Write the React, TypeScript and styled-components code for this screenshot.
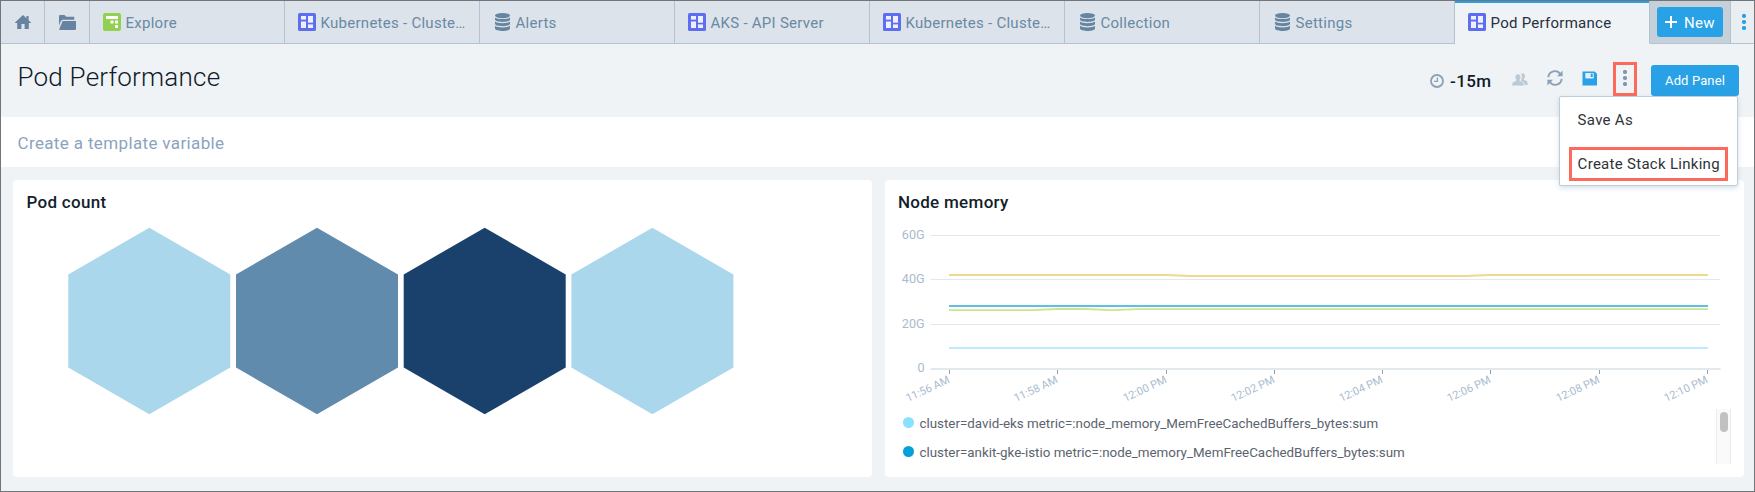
import React from "react";
import styled, { createGlobalStyle } from "styled-components";

const GlobalStyle = createGlobalStyle`
  * { box-sizing: border-box; }
  body { margin: 0; font-family: Roboto, "Liberation Sans", sans-serif; }
  svg { display: block; flex: none; }
  button { font-family: inherit; border: 0; padding: 0; }
`;

const Page = styled.div`
  display: flex;
  flex-direction: column;
  width: 1755px;
  height: 492px;
  border: 1px solid #737578;
  background: #eff3f5;
  overflow: hidden;
`;

/* ---------- Tab bar ---------- */

const TabBar = styled.nav`
  display: flex;
  flex: none;
  height: 43px;
`;

const NavCell = styled.div<{ $width: number; $bg?: string; $last?: boolean }>`
  display: flex;
  flex: none;
  align-items: center;
  justify-content: center;
  width: ${(p) => p.$width}px;
  background: ${(p) => p.$bg ?? "#dce3ea"};
  border-right: ${(p) => (p.$last ? "0" : "1px solid #b4c3d1")};
  border-bottom: 1px solid #b4c3d1;
`;

const Tab = styled.div<{ $active?: boolean }>`
  display: flex;
  flex: none;
  align-items: center;
  gap: 4.5px;
  width: 195px;
  padding: 0 13px;
  color: ${(p) => (p.$active ? "#26303f" : "#6a89a5")};
  background: ${(p) => (p.$active ? "#eff3f5" : "#dce3ea")};
  border-right: 1px solid #b4c3d1;
  border-bottom: 1px solid ${(p) => (p.$active ? "#eff3f5" : "#b4c3d1")};
  box-shadow: ${(p) => (p.$active ? "inset 0 2px 0 #29a1e6" : "none")};
`;

const TabLabel = styled.span`
  padding-top: 2px;
  font-size: 15px;
  line-height: 18px;
  letter-spacing: 0.27px;
  white-space: nowrap;
`;

const NewButton = styled.button`
  display: flex;
  align-items: center;
  gap: 6px;
  width: 66px;
  height: 30px;
  padding-left: 7px;
  border-radius: 3px;
  background: #29a1e6;
  color: #fff;
`;

/* ---------- Header ---------- */

const Header = styled.header`
  position: relative;
  z-index: 1;
  display: flex;
  flex: none;
  justify-content: space-between;
  height: 73px;
  padding: 0 15px 0 16.5px;
`;

const Title = styled.h1`
  margin: 0;
  padding-top: 18px;
  font-size: 26px;
  line-height: 30px;
  font-weight: 300;
  letter-spacing: 0.22px;
  color: #101b2b;
`;

const Toolbar = styled.div`
  display: flex;
  align-items: center;
  height: 70px;
`;

const TimeRange = styled.div`
  display: flex;
  align-items: center;
  gap: 6px;
  width: 72px;
  padding-top: 4px;
  font-size: 17px;
  line-height: 20px;
  font-weight: 500;
  letter-spacing: 0.4px;
  color: #101b2b;
`;

const ToolSlot = styled.div<{ $raised?: boolean }>`
  display: flex;
  align-items: center;
  justify-content: center;
  width: 35px;
  height: 34px;
  padding-bottom: ${(p) => (p.$raised ? 2 : 0)}px;
`;

const Marked = styled.div`
  display: flex;
  align-items: center;
  justify-content: center;
  width: 24px;
  height: 34px;
  padding-bottom: 2px;
  border: 3px solid #fb6a5c;
`;

const AddPanel = styled.button`
  width: 88px;
  height: 31px;
  margin: 3px 0 0 9px;
  border-radius: 3px;
  background: #29a1e6;
  color: #fff;
  font-size: 13px;
  line-height: 31px;
  letter-spacing: 0.12px;
`;

const Menu = styled.div`
  position: absolute;
  top: 52px;
  right: 16px;
  width: 179px;
  height: 90px;
  padding: 0 9px;
  border: 1px solid #bccddb;
  border-radius: 2px;
  background: #fff;
  box-shadow: 0 2px 5px rgba(120, 150, 180, 0.3);
`;

const MenuItem = styled.div<{ $marked?: boolean }>`
  display: flex;
  align-items: center;
  height: ${(p) => (p.$marked ? 34 : 48)}px;
  margin-top: ${(p) => (p.$marked ? 2 : 0)}px;
  padding-left: ${(p) => (p.$marked ? 5.6 : 8.6)}px;
  padding-bottom: ${(p) => (p.$marked ? 0 : 2)}px;
  border: ${(p) => (p.$marked ? "3px solid #fb6a5c" : "0")};
  font-size: 15px;
  letter-spacing: 0.29px;
  white-space: nowrap;
  color: #2f3338;
`;

const VariableBar = styled.div`
  flex: none;
  height: 50px;
  padding: 0 16.5px;
  background: #fff;
  color: #8ba3bd;
  font-size: 17px;
  line-height: 52px;
  letter-spacing: 0.36px;
`;

/* ---------- Panels ---------- */

const Panels = styled.main`
  display: grid;
  grid-template-columns: 859px 859px;
  column-gap: 12.5px;
  padding: 13px 0 0 12px;
`;

const Panel = styled.section`
  height: 297px;
  border-radius: 4px;
  background: #fff;
`;

const PanelTitle = styled.h2`
  margin: 0;
  padding: 12px 0 0 13.4px;
  font-size: 17px;
  line-height: 20px;
  font-weight: 500;
  letter-spacing: 0.3px;
  color: #131e2c;
`;

const LegendBox = styled.div`
  display: flex;
  justify-content: space-between;
  height: 55px;
  padding: 0 13px 0 18px;
`;

const LegendList = styled.ul`
  margin: 0;
  padding: 0;
  list-style: none;
`;

const LegendItem = styled.li<{ $color: string }>`
  display: flex;
  align-items: center;
  gap: 6px;
  height: 29px;
  font-size: 13.36px;
  line-height: 29px;
  color: #5c636e;

  &::before {
    content: "";
    width: 11px;
    height: 11px;
    margin-bottom: 2px;
    border-radius: 50%;
    background: ${(p) => p.$color};
  }
`;

const ScrollTrack = styled.div`
  width: 15px;
  padding: 3px 2px 0 3px;
  background: #fafafa;
  border: solid #ececec;
  border-width: 0 1px;
`;

const ScrollThumb = styled.div`
  width: 8px;
  height: 20px;
  border-radius: 4px;
  background: #c1c1c1;
`;

/* ---------- Icons ---------- */

const HomeIcon = () => (
  <svg width="16" height="14" viewBox="0 0 16 14" fill="#66849f">
    <path d="M8 0L11.4 3.2V1H13.6V5.2L16 7.5V8H13.8V14H9.6V9H6.4V14H2.2V8H0V7.5Z" />
  </svg>
);

const FolderIcon = () => (
  <svg width="17" height="15" viewBox="0 0 17 15" fill="#66849f">
    <path d="M0 1Q0 0 1 0H5.5L7.2 1.7H15.2V4.8H3.1L1.6 6.5L0 10.5Z" />
    <path d="M3.6 6H17V13.8Q17 15 15.8 15H0.8Q0 15 0.3 14Z" />
  </svg>
);

const ExploreIcon = () => (
  <svg width="18" height="18" viewBox="0 0 18 18">
    <rect width="18" height="18" rx="2.2" fill="#92d050" />
    <g fill="#fff">
      <rect x="3" y="3" width="12" height="3" />
      <rect x="7.5" y="7.5" width="3" height="3" />
      <rect x="12" y="7.5" width="3" height="3" />
      <rect x="12" y="12" width="3" height="3" />
    </g>
  </svg>
);

const DashboardIcon = () => (
  <svg width="18" height="18" viewBox="0 0 18 18">
    <rect width="18" height="18" rx="1.6" fill="#5e6ef0" />
    <g fill="#eef0ff">
      <rect x="3" y="3" width="5" height="3.6" />
      <rect x="3" y="8.5" width="5" height="6.5" />
      <rect x="10" y="3" width="5" height="6.7" />
      <rect x="10" y="11.4" width="5" height="3.6" />
    </g>
  </svg>
);

const DatabaseIcon = () => (
  <svg width="18" height="18" viewBox="0 0 18 18" fill="#6685a1">
    <ellipse cx="9.5" cy="2.6" rx="7.5" ry="2.6" />
    <path d="M2 4.4C4 6.6 15 6.6 17 4.4V6.6C17 9.8 2 9.8 2 6.6Z" />
    <path d="M2 8.6C4 10.8 15 10.8 17 8.6V10.8C17 14 2 14 2 10.8Z" />
    <path d="M2 12.8C4 15 15 15 17 12.8V15.2C17 18.9 2 18.9 2 15.2Z" />
  </svg>
);

const PlusIcon = () => (
  <svg width="14" height="14" viewBox="0 0 14 14" stroke="#fff" strokeWidth="2">
    <path d="M7 1V13M1 7H13" />
  </svg>
);

const DotsIcon = ({ color }: { color: string }) => (
  <svg width="4" height="16" viewBox="0 0 4 16" fill={color}>
    <circle cx="2" cy="2" r="2.1" />
    <circle cx="2" cy="8" r="2.1" />
    <circle cx="2" cy="14" r="2.1" />
  </svg>
);

const ClockIcon = () => (
  <svg width="14" height="14" viewBox="0 0 14 14" fill="none" stroke="#8ba1b8">
    <circle cx="7" cy="7" r="6" strokeWidth="1.8" />
    <path d="M7.4 3.6V7.4H4" strokeWidth="1.3" />
  </svg>
);

const PeopleIcon = () => (
  <svg width="16" height="13" viewBox="0 0 16 13" fill="#bcc8d4">
    <path d="M9.2 0.6A2.7 2.9 0 1 1 11.4 5.9L12.6 7.2Q15.4 7.7 15.5 9.6V12H12.8Q12.8 9.2 9 8.3Q8.6 7.8 9.2 6.9Q10.6 3.6 9.2 0.6Z" />
    <path
      d="M5.8 1A2.8 3.2 0 0 1 7.8 6.6V7.8Q11.8 8.8 11.9 11V12.8H0V11Q0 8.8 4 7.8V6.6A2.8 3.2 0 0 1 5.8 1Z"
      stroke="#eff3f5"
      strokeWidth="0.5"
    />
  </svg>
);

const RefreshIcon = () => (
  <svg width="16" height="16" viewBox="0 0 16 16" fill="none" stroke="#8ba1b8" strokeWidth="1.9">
    <path d="M1.3 7.2A6.6 6.6 0 0 1 13.4 4.2" />
    <path d="M14.7 8.8A6.6 6.6 0 0 1 2.6 11.8" />
    <path d="M15.6 0.6V6.2H10Z M0.4 15.4V9.8H6Z" fill="#8ba1b8" stroke="none" />
  </svg>
);

const SaveIcon = () => (
  <svg width="15" height="15" viewBox="0 0 15 15">
    <path d="M0.5 0.5H12.6L15 2.8V14.5H0.5Z" fill="#29a1e6" />
    <path d="M3.3 2H11.7V6.7Q11.7 7.5 10.9 7.5H4.1Q3.3 7.5 3.3 6.7Z" fill="#e2f2fc" />
    <rect x="8.7" y="2.6" width="2" height="3.4" fill="#29a1e6" />
  </svg>
);

/* ---------- Charts ---------- */

const hexagons = ["#abd7ec", "#618bad", "#19416b", "#abd7ec"];

const PodCountChart = () => (
  <svg width="859" height="204" viewBox="13 212 859 204">
    {hexagons.map((fill, i) => {
      const cx = 149.3 + i * 167.7;
      return (
        <polygon
          key={i}
          fill={fill}
          points={`${cx},227.8 ${cx + 81},274.4 ${cx + 81},367.6 ${cx},414.2 ${cx - 81},367.6 ${cx - 81},274.4`}
        />
      );
    })}
  </svg>
);

const ChartSvg = styled.svg`
  width: 859px;
  height: 197px;
  font-family: Roboto, sans-serif;
  fill: #a9bbce;
`;

const gridRows: [string, number][] = [
  ["60G", 235.5],
  ["40G", 279.5],
  ["20G", 324.5],
  ["0", 369],
];

const timeTicks: [string, number][] = [
  ["11:56 AM", 949.5],
  ["11:58 AM", 1057.5],
  ["12:00 PM", 1166.5],
  ["12:02 PM", 1274.5],
  ["12:04 PM", 1382.5],
  ["12:06 PM", 1490.5],
  ["12:08 PM", 1599.5],
  ["12:10 PM", 1707.5],
];

const series: [string, string][] = [
  ["#efd98c", "949,275 1167,275 1190,276 1465,276 1489,275 1708,275"],
  ["#c8e692", "949,310.2 1032,310.2 1057,309 1085,309 1112,310.2 1138,309.2 1708,309.2"],
  ["#62bfe4", "949,306 1708,306"],
  ["#bdebff", "949,348 1708,348"],
];

const NodeMemoryChart = () => (
  <ChartSvg viewBox="885 212 859 197">
    {gridRows.map(([label, y], i) => (
      <g key={label}>
        <line x1="930.5" x2="1720.5" y1={y} y2={y} stroke="#e2e9ed" strokeWidth={i === 3 ? 2 : 1.2} />
        <text x="924.6" y={i === 3 ? 372.3 : y + 3.8} fontSize="12.6" textAnchor="end">
          {label}
        </text>
      </g>
    ))}
    {series.map(([color, points]) => (
      <polyline key={color} points={points} fill="none" stroke={color} strokeWidth="1.8" />
    ))}
    {timeTicks.map(([label, x]) => (
      <g key={label}>
        <line x1={x} x2={x} y1="370" y2="374" stroke="#9b9b9b" />
        <text fontSize="11" textAnchor="end" transform={`translate(${x + 1} 382.3) rotate(-25)`}>
          {label}
        </text>
      </g>
    ))}
  </ChartSvg>
);

const tabs: [React.FC, string][] = [
  [ExploreIcon, "Explore"],
  [DashboardIcon, "Kubernetes - Cluste…"],
  [DatabaseIcon, "Alerts"],
  [DashboardIcon, "AKS - API Server"],
  [DashboardIcon, "Kubernetes - Cluste…"],
  [DatabaseIcon, "Collection"],
  [DatabaseIcon, "Settings"],
  [DashboardIcon, "Pod Performance"],
];

export default function App() {
  return (
    <>
      <GlobalStyle />
      <Page>
        <TabBar>
          <NavCell $width={44}><HomeIcon /></NavCell>
          <NavCell $width={45}><FolderIcon /></NavCell>
          {tabs.map(([Icon, label], i) => (
            <Tab key={i} $active={i === tabs.length - 1}>
              <Icon />
              <TabLabel>{label}</TabLabel>
            </Tab>
          ))}
          <NavCell $width={81} $bg="#c6d0d9">
            <NewButton>
              <PlusIcon />
              <TabLabel>New</TabLabel>
            </NewButton>
          </NavCell>
          <NavCell $width={25} $bg="#e9eef3" $last>
            <DotsIcon color="#29a1e6" />
          </NavCell>
        </TabBar>
        <Header>
          <Title>Pod Performance</Title>
          <Toolbar>
            <TimeRange>
              <ClockIcon />
              -15m
            </TimeRange>
            <ToolSlot><PeopleIcon /></ToolSlot>
            <ToolSlot $raised><RefreshIcon /></ToolSlot>
            <ToolSlot $raised><SaveIcon /></ToolSlot>
            <ToolSlot>
              <Marked><DotsIcon color="#8197ad" /></Marked>
            </ToolSlot>
            <AddPanel>Add Panel</AddPanel>
          </Toolbar>
          <Menu>
            <MenuItem>Save As</MenuItem>
            <MenuItem $marked>Create Stack Linking</MenuItem>
          </Menu>
        </Header>
        <VariableBar>Create a template variable</VariableBar>
        <Panels>
          <Panel>
            <PanelTitle>Pod count</PanelTitle>
            <PodCountChart />
          </Panel>
          <Panel>
            <PanelTitle>Node memory</PanelTitle>
            <NodeMemoryChart />
            <LegendBox>
              <LegendList>
                <LegendItem $color="#87e1ff">
                  cluster=david-eks metric=:node_memory_MemFreeCachedBuffers_bytes:sum
                </LegendItem>
                <LegendItem $color="#059fdb">
                  cluster=ankit-gke-istio metric=:node_memory_MemFreeCachedBuffers_bytes:sum
                </LegendItem>
              </LegendList>
              <ScrollTrack><ScrollThumb /></ScrollTrack>
            </LegendBox>
          </Panel>
        </Panels>
      </Page>
    </>
  );
}
